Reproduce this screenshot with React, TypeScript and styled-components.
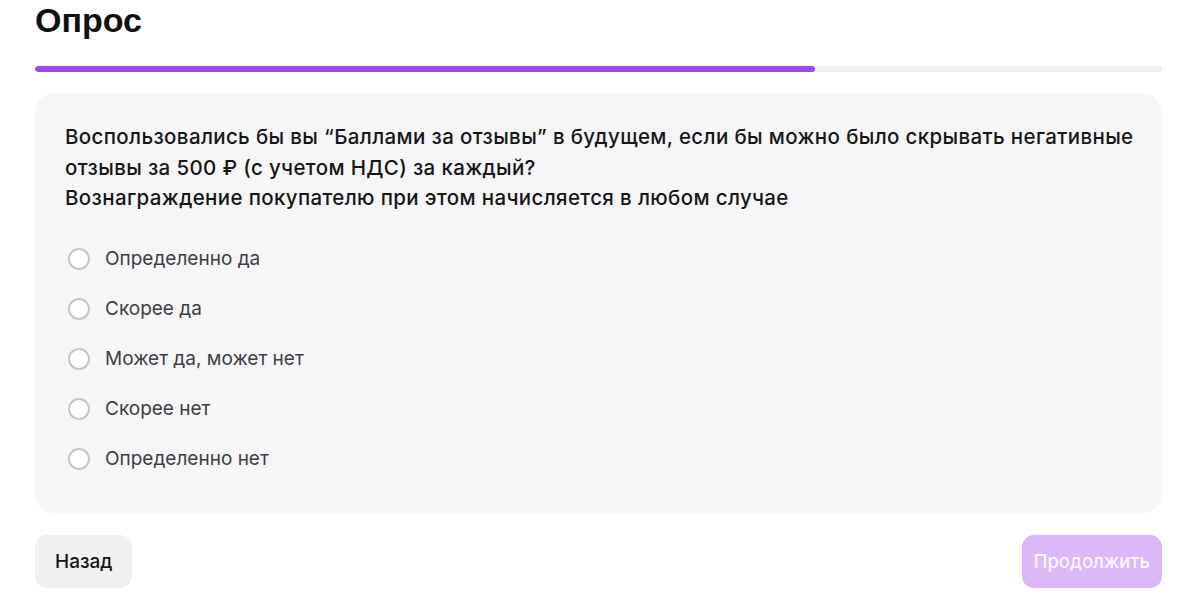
import styled, { createGlobalStyle } from "styled-components";

const options = [
  "Определенно да",
  "Скорее да",
  "Может да, может нет",
  "Скорее нет",
  "Определенно нет",
];

export default function App() {
  return (
    <>
      <GlobalStyle />
      <Page>
        <Title>Опрос</Title>
        <Progress>
          <ProgressFill style={{ width: `${(780 / 1127) * 100}%` }} />
        </Progress>
        <Card>
          <Question>
            Воспользовались бы вы “Баллами за отзывы” в будущем, если бы можно было скрывать негативные
            <br />
            отзывы за 500 ₽ (с учетом НДС) за каждый?
            <br />
            Вознаграждение покупателю при этом начисляется в любом случае
          </Question>
          <Options>
            {options.map((label) => (
              <Option key={label}>
                <Radio />
                <span>{label}</span>
              </Option>
            ))}
          </Options>
        </Card>
        <Footer>
          <Button>Назад</Button>
          <Button primary disabled>
            Продолжить
          </Button>
        </Footer>
      </Page>
    </>
  );
}

const GlobalStyle = createGlobalStyle`
  body {
    margin: 0;
    background: #fff;
    font-family: Inter, "Noto Sans", sans-serif;
    color: #1a1a1a;
  }
`;

const Page = styled.div`
  display: flex;
  flex-direction: column;
  padding: 0 38px 0 35px;
`;

const Title = styled.h1`
  margin: 0;
  font-family: "Liberation Sans", Arial, sans-serif;
  font-size: 34px;
  line-height: 40px;
  font-weight: 700;
  color: #111;
`;

const Progress = styled.div`
  margin-top: 26px;
  height: 6px;
  border-radius: 3px;
  background: #efeff2;
  overflow: hidden;
`;

const ProgressFill = styled.div`
  height: 100%;
  border-radius: 3px;
  background: #9a4ae8;
`;

const Card = styled.div`
  margin-top: 21px;
  padding: 29px 30px 29px 30px;
  border-radius: 20px;
  background: #f6f6f9;
`;

const Question = styled.p`
  margin: 0;
  font-size: 20.5px;
  line-height: 30.5px;
  font-weight: 500;
  letter-spacing: 0.36px;
  white-space: nowrap;
  color: #161616;
`;

const Options = styled.div`
  display: flex;
  flex-direction: column;
  margin-top: 20px;
`;

const Option = styled.label`
  display: flex;
  align-items: center;
  gap: 15px;
  height: 50px;
  padding-left: 3px;
  font-size: 19px;
  color: #3d3d42;
  cursor: pointer;
`;

const Radio = styled.span`
  width: 22px;
  height: 22px;
  box-sizing: border-box;
  border: 2px solid #c5c5ca;
  border-radius: 50%;
  background: #fff;
`;

const Footer = styled.div`
  display: flex;
  justify-content: space-between;
  margin-top: 22px;
`;

const Button = styled.button<{ primary?: boolean }>`
  height: 53px;
  padding: ${(p) => (p.primary ? "0 12px" : "0 20px")};
  border: none;
  border-radius: 12px;
  font-family: Inter, "Noto Sans", sans-serif;
  font-size: ${(p) => (p.primary ? "18.5px" : "19px")};
  font-weight: 500;
  background: ${(p) => (p.primary ? "#dbb8f8" : "#f0f0f2")};
  color: ${(p) => (p.primary ? "#fbf6ff" : "#151515")};
  cursor: pointer;
  &:disabled {
    cursor: default;
  }
`;
